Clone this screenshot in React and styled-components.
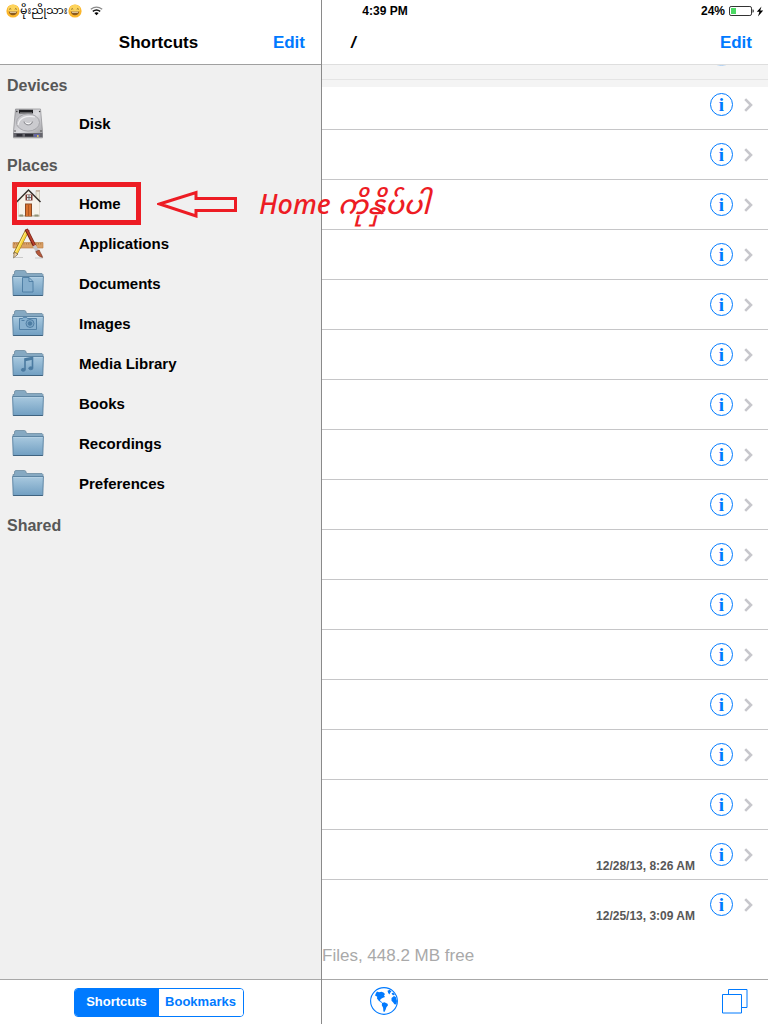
// App.jsx

import { useState } from "react";
import styled, { createGlobalStyle } from "styled-components";

const COLORS = {
    blue: "#007aff",
    black: "#000",
    heading: "#575757",
    muted: "#a9a9a9",
    chevron: "#c7c7cc",
    line: "#c6c6c8",
    divider: "#8a8a8a",
    sidebar: "#f0f0f0",
    bar: "#f4f4f4",
    red: "#ed1c24",
};

const SECTIONS = [
    { title: "Devices", items: [{ name: "Disk", icon: "disk" }] },
    {
        title: "Places",
        items: [
            { name: "Home", icon: "home", marked: true },
            { name: "Applications", icon: "apps" },
            { name: "Documents", icon: "folder", emblem: "document" },
            { name: "Images", icon: "folder", emblem: "camera" },
            { name: "Media Library", icon: "folder", emblem: "music" },
            { name: "Books", icon: "folder" },
            { name: "Recordings", icon: "folder" },
            { name: "Preferences", icon: "folder" },
        ],
    },
    { title: "Shared", items: [] },
];

const FILES = [
    ...Array.from({ length: 15 }, (_, i) => ({ id: i, date: "" })),
    { id: 15, date: "12/28/13, 8:26 AM" },
    { id: 16, date: "12/25/13, 3:09 AM" },
];

const DiskIcon = () => (
    <svg width="32" height="32" viewBox="0 -1 32 32" aria-hidden="true">
        <defs>
            <linearGradient id="diskTop" x1="0" y1="0" x2="1" y2="1">
                <stop offset="0" stopColor="#a9a9ad" />
                <stop offset="0.5" stopColor="#dcdce0" />
                <stop offset="1" stopColor="#98989c" />
            </linearGradient>
        </defs>
        <path d="M3.500 1h25l2 22v6.500h-29V23z" fill="url(#diskTop)" stroke="#8c8c90" strokeWidth="0.7" />
        <path d="M7 1.800h14v3.600H7z" fill="#1f1f22" />
        <path d="M8.500 4.600h11" stroke="#b9b9bd" strokeDasharray="1 1" />
        <ellipse cx="16" cy="14.500" rx="11.500" ry="8.600" fill="#cbcbcf" stroke="#9c9ca1" strokeWidth="0.8" />
        <path d="M6 17c1-7 8-10 17-8" fill="none" stroke="#eeeef1" strokeWidth="1.200" />
        <path d="M12 13.500c.5 4.500 8 4.500 8.600 0" fill="none" stroke="#8b8b90" />
        <path d="M13.500 14.500c1.400 1.600 4 1.600 5.200 0" fill="none" stroke="#fff" />
        <circle cx="4.800" cy="3.500" r="0.800" fill="#444" />
        <circle cx="27.600" cy="3.500" r="0.800" fill="#444" />
        <circle cx="3" cy="23" r="0.800" fill="#444" />
        <circle cx="29" cy="23" r="0.800" fill="#444" />
        <path d="M1.500 25h29v4.500h-29z" fill="#66666d" />
        <path d="M4.500 26h6v2.500h-6zM13 26h8v2.500h-8z" fill="#2e2e36" />
        <path d="M22 26h6v3h-6z" fill="#6465a0" />
        <path d="M25 27.200h1.600v1.500H25z" fill="#ffe94a" />
        <path d="M1.500 30h29" stroke="#bdbdbd" />
    </svg>
);

const HomeIcon = () => (
    <svg width="32" height="32" viewBox="0 -1 32 32" aria-hidden="true">
        <path d="M24 2.500h3.500V12H24z" fill="#eee9da" stroke="#b9b3a3" strokeWidth="0.6" />
        <path d="M24 2h4v1.800h-4z" fill="#c9b4a4" />
        <path d="M6.500 12.500L16.500 2l11 10.500v16h-21z" fill="#f6f3ea" stroke="#d6d0c0" strokeWidth="0.6" />
        <path d="M6.500 27h21v1.500h-21z" fill="#c8c0b2" />
        <path d="M4.600 14L16.500 2l12 12" fill="none" stroke="#38322e" strokeWidth="1.500" />
        <path d="M13.500 6.500h7v6h-7z" fill="#7d3a34" />
        <path d="M15 7h4v5h-4z" fill="#dbe6ee" />
        <path d="M17 7v5M15 9.500h4" stroke="#4f4843" strokeWidth="0.8" />
        <path d="M13 15.500h7V28.500h-7z" fill="#8b4a22" />
        <path d="M14 16.500h5V28h-5z" fill="#d9722e" />
        <path d="M16.500 17v11" stroke="#a44f1b" strokeWidth="0.7" />
        <path d="M7.500 26.500h3.500v2h-3.500zM22.500 26.500h4v2h-4z" fill="#8f9478" />
    </svg>
);

const AppsIcon = () => (
    <svg width="32" height="32" viewBox="0 -1 32 32" aria-hidden="true">
        <path d="M1 14.500h30V20H1z" fill="#d9a066" stroke="#b87a3f" strokeWidth="0.6" />
        <path d="M2 15.800h28" stroke="#a8723c" strokeWidth="1.600" strokeDasharray="0.8 1.6" />
        <path d="M3 29.500h8M23 30h8" stroke="#c9c9c9" />
        <path d="M15.200 2.400L3 26.500" stroke="#8a6b13" strokeWidth="4.200" />
        <path d="M14.600 3.800L4 25" stroke="#fbd53b" strokeWidth="3" />
        <path d="M13.600 4L3.400 24.400" stroke="#fdec91" strokeWidth="0.9" />
        <path d="M2.200 24l3.800 2-4.400 4z" fill="#efd1a4" stroke="#5a4a32" strokeWidth="0.6" />
        <path d="M13.200 3.400l1.400-2.600 3.400 1.800-1.200 2.600z" fill="#dd8b87" />
        <path d="M14.200 1.200L23 18.800" stroke="#701c12" strokeWidth="3.400" />
        <path d="M14.600 1.600L23 18.400" stroke="#b9412d" strokeWidth="1.800" />
        <path d="M22.200 17.600l3.400 6" stroke="#c4c4c9" strokeWidth="3.400" />
        <path d="M23.800 23.600l3.400-1.600c1 3 2.600 4.400 3.400 7.400-3-.8-5.800-2.400-6.800-5.800z" fill="#b65a3c" stroke="#6c3120" strokeWidth="0.6" />
    </svg>
);

const EMBLEMS = {
    document: (
        <path d="M10.500 9.500h6.500l4 4v10.500h-10.500zM17 9.500v4h4" fill="#86afce" />
    ),
    camera: (
        <>
            <path d="M7.500 10.500h3l1-1.200h3l1 1.200h9v11h-17z" fill="#88b1cf" />
            <circle cx="18" cy="15.500" r="4" fill="#7ba6c6" />
            <circle cx="18" cy="15.500" r="1.800" fill="#4c7da3" />
            <path d="M9.500 12.500h3" />
        </>
    ),
    music: (
        <>
            <path d="M13 21.500v-10.500l7.500-1.500v10.500" fill="none" strokeWidth="1.600" />
            <path d="M13 12.300l7.500-1.500" fill="none" strokeWidth="2" />
            <ellipse cx="11.300" cy="21.800" rx="2" ry="1.500" fill="#4b7ba1" />
            <ellipse cx="18.800" cy="20.300" rx="2" ry="1.500" fill="#4b7ba1" />
        </>
    ),
};

const FolderIcon = ({ emblem }) => (
    <svg width="32" height="32" viewBox="0 -1 32 32" aria-hidden="true">
        <defs>
            <linearGradient id="folderFront" x1="0" y1="0" x2="0" y2="1">
                <stop offset="0" stopColor="#a9c9df" />
                <stop offset="1" stopColor="#719fc2" />
            </linearGradient>
        </defs>
        <path d="M1 8V6.500h1.500V4q0-1.500 1.500-1.500h8.500q1.200 0 1.500 1.500l.5 1.500H30l1 1V10H1z" fill="#86a9c2" stroke="#6c8ba2" strokeWidth="0.8" />
        <path d="M.6 8.500h30.800l-.6 19H1.200z" fill="url(#folderFront)" stroke="#58809f" strokeWidth="0.9" />
        <path d="M1.500 9.500h29" stroke="#b4d0e3" />
        <path d="M1.200 27.500h29.600" stroke="#3f6380" />
        <g stroke="#4b7ba1" strokeWidth="0.9">{emblem && EMBLEMS[emblem]}</g>
    </svg>
);

const ICONS = { disk: DiskIcon, home: HomeIcon, apps: AppsIcon, folder: FolderIcon };

const Smiley = () => (
    <svg width="14" height="14" viewBox="0 0 14 14" aria-hidden="true">
        <circle cx="7" cy="7" r="6.600" fill="#fbb62c" />
        <ellipse cx="7" cy="5" rx="5.200" ry="4.200" fill="#fdd45c" />
        <path d="M3.200 5.400q1-1.600 2 0M8.800 5.400q1-1.600 2 0" fill="none" stroke="#7b5a20" strokeWidth="0.9" />
        <path d="M2.800 7.400h8.400q-.6 3.800-4.200 3.800t-4.200-3.800z" fill="#8a5a1e" />
        <path d="M3.600 7.800h6.800l-.5 1H4.100z" fill="#f4e4c0" />
    </svg>
);

const WifiIcon = () => (
    <svg width="13" height="10" viewBox="0 0 13 10" aria-hidden="true">
        <path d="M.8 3.300q5.700-4.400 11.400 0" fill="none" stroke="#8b8b8b" strokeWidth="1.300" />
        <path d="M2.800 5.400q3.700-2.800 7.400 0" fill="none" stroke="#111" strokeWidth="1.500" />
        <path d="M4.400 7q2.100-1.500 4.200 0L6.500 9.200z" fill="#000" />
    </svg>
);

const BatteryIcon = () => (
    <svg width="35" height="11" viewBox="0 0 35 11" aria-hidden="true">
        <rect x="0.500" y="0.500" width="22" height="9" rx="1.600" fill="#fff" stroke="#333" />
        <path d="M2 2h5v6H2z" fill="#4cd964" />
        <path d="M23.500 3.200q1.400.3 1.400 1.800t-1.400 1.800z" fill="#333" />
        <path d="M32.500 .4L27.800 5.800h2.600L29 10.400l5.200-6h-3z" fill="#000" />
    </svg>
);

const Chevron = () => (
    <svg width="9" height="14" viewBox="0 0 9 14" aria-hidden="true">
        <path d="M1.200 1.200L7 7l-5.800 5.800" fill="none" stroke={COLORS.chevron} strokeWidth="2.600" />
    </svg>
);

const GlobeIcon = () => (
    <svg width="28" height="28" viewBox="0 0 28 28" aria-hidden="true">
        <circle cx="14" cy="14" r="13.400" fill="#fff" stroke={COLORS.blue} strokeWidth="1.100" />
        <g fill={COLORS.blue}>
            <path d="M5 8.500l1-2.500 1-1.500 2 .8 2.500-.6 2 .8 1.500 1.500-1 1.500 1 1.500-2 .8-1.800 1-1.200 1.200.5 1.300 2 1-1.200.5L8.500 13.500l-1.500-2 .2-1.800-1.200-.7z" />
            <path d="M12 16l2.500-.8 3 1.500.5 1.600-1.600 2-.8 2.500-1.200 2.300-1-.6-.3-3.700-1.300-2.500z" />
            <path d="M17.500 3.800l2.200-1 1.800 1.700-1.300 1.300-.8 1.700-1.200-1.400zM21.500 6.500l1.800-1 1.600 2.500-2 .2z" />
            <path d="M21.500 11l2.500-2 1.800 1 1.200 4-.6 3.500-2-.2-1.400-2-1.500-1.500z" />
        </g>
    </svg>
);

const WindowsIcon = () => (
    <svg width="26" height="25" viewBox="0 0 26 25" aria-hidden="true">
        <path d="M6.500 5.500v-5h18.500V18.500H19.500" fill="none" stroke={COLORS.blue} />
        <path d="M.5 5.500h19v18.500H.5z" fill="#fff" stroke={COLORS.blue} />
    </svg>
);

const HomeCallout = () => (
    <Callout>
        <CalloutFrame />
        <svg width="80" height="28" viewBox="0 0 80 28" aria-hidden="true">
            <path d="M2.500 14L39 2.500v6h39.500v12H39v5.500z" fill="none" stroke={COLORS.red} strokeWidth="3" />
        </svg>
        <CalloutText>Home ကိုနှိပ်ပါ</CalloutText>
    </Callout>
);

const App = () => {
    const [tab, setTab] = useState("Shortcuts");

    return (
        <>
            <GlobalStyle />
            <Screen>
                <StatusBar>
                    <Carrier>
                        <Smiley />
                        <CarrierName>မိုးညိုသား</CarrierName>
                        <Smiley />
                        <WifiSlot><WifiIcon /></WifiSlot>
                    </Carrier>
                    <span>4:39 PM</span>
                    <Battery>
                        24%
                        <BatteryIcon />
                    </Battery>
                </StatusBar>

                <Sidebar>
                    <SidebarHeader>
                        <Title>Shortcuts</Title>
                        <EditButton>Edit</EditButton>
                    </SidebarHeader>
                    <Shortcuts>
                        {SECTIONS.map(({ title, items }) => (
                            <section key={title}>
                                <SectionTitle>{title}</SectionTitle>
                                <List>
                                    {items.map(({ name, icon, emblem, marked }) => {
                                        const Icon = ICONS[icon];
                                        return (
                                            <ShortcutItem key={name}>
                                                <ShortcutLink href="#">
                                                    <Icon emblem={emblem} />
                                                    {name}
                                                </ShortcutLink>
                                                {marked && <HomeCallout />}
                                            </ShortcutItem>
                                        );
                                    })}
                                </List>
                            </section>
                        ))}
                    </Shortcuts>
                    <SidebarToolbar>
                        <Segments>
                            {["Shortcuts", "Bookmarks"].map(name => (
                                <Segment key={name} $active={tab === name} onClick={() => setTab(name)}>
                                    {name}
                                </Segment>
                            ))}
                        </Segments>
                    </SidebarToolbar>
                </Sidebar>

                <Browser>
                    <BrowserHeader>
                        <Path>/</Path>
                        <EditButton>Edit</EditButton>
                    </BrowserHeader>
                    <ListEdge>
                        <PeekCircle />
                    </ListEdge>
                    <FileList>
                        {FILES.map(({ id, date }) => (
                            <FileRow key={id}>
                                {date && <FileDate>{date}</FileDate>}
                                <InfoButton aria-label="Info">i</InfoButton>
                                <OpenLink href="#" aria-label="Open">
                                    <Chevron />
                                </OpenLink>
                            </FileRow>
                        ))}
                    </FileList>
                    <Summary>Files, 448.2 MB free</Summary>
                    <BrowserToolbar>
                        <IconButton aria-label="Network"><GlobeIcon /></IconButton>
                        <IconButton aria-label="Windows"><WindowsIcon /></IconButton>
                    </BrowserToolbar>
                </Browser>
            </Screen>
        </>
    );
};

const GlobalStyle = createGlobalStyle`
    *, *::before, *::after {
        box-sizing: border-box;
    }

    body {
        margin: 0;
        background: #fff;
        color: ${COLORS.black};
        font-family: "Liberation Sans", Arial, sans-serif;
    }

    button {
        border: none;
        background: none;
        padding: 0;
        font: inherit;
        cursor: pointer;
    }

    svg {
        display: block;
        flex-shrink: 0;
    }
`;

const Screen = styled.div`
    min-height: 100vh;
    display: grid;
    grid-template-columns: 322px 1fr;
    grid-template-rows: 20px 1fr;
`;

const StatusBar = styled.div`
    grid-column: 1 / -1;
    grid-row: 1;
    z-index: 1;
    display: grid;
    grid-template-columns: 1fr auto 1fr;
    align-items: center;
    padding: 2px 4px 0 6px;
    font-size: 12px;
    line-height: 18px;
    font-weight: 700;
`;

const Carrier = styled.div`
    display: flex;
    align-items: center;
`;

const CarrierName = styled.span`
    font-family: "Noto Sans Myanmar", "Noto Sans", sans-serif;
    font-size: 11px;
    font-weight: 400;
    white-space: nowrap;
`;

const WifiSlot = styled.span`
    margin-left: 8px;
`;

const Battery = styled.div`
    display: flex;
    justify-content: flex-end;
    align-items: center;
    gap: 4px;
`;

const Sidebar = styled.aside`
    grid-column: 1;
    grid-row: 1 / -1;
    display: flex;
    flex-direction: column;
    border-right: 1px solid ${COLORS.divider};
    background: ${COLORS.sidebar};
`;

const Browser = styled.main`
    grid-column: 2;
    grid-row: 1 / -1;
    min-width: 0;
    display: flex;
    flex-direction: column;
`;

const Header = styled.header`
    height: 65px;
    padding: 22px 16px 0;
    display: grid;
    align-items: center;
    background: #fff;
    font-size: 17px;
    font-weight: 700;
`;

const SidebarHeader = styled(Header)`
    grid-template-columns: 1fr auto 1fr;
    padding-left: 12px;
    border-bottom: 1px solid #a0a0a0;
`;

const BrowserHeader = styled(Header)`
    grid-template-columns: 1fr auto;
    padding-left: 29px;
    border-bottom: 1px solid #dedede;
`;

const Title = styled.h1`
    grid-column: 2;
    margin: 0;
    font-size: 17px;
`;

const Path = styled.h2`
    margin: 0;
    font-size: 17px;
    font-style: italic;
`;

const EditButton = styled.button`
    justify-self: end;
    color: ${COLORS.blue};
`;

const Shortcuts = styled.nav`
    flex: 1;
`;

const SectionTitle = styled.h2`
    margin: 0;
    padding: 2px 7px 0;
    font-size: 16px;
    line-height: 38px;
    color: ${COLORS.heading};
`;

const List = styled.ul`
    margin: 0;
    padding: 0;
    list-style: none;
`;

const ShortcutItem = styled.li`
    position: relative;
`;

const ShortcutLink = styled.a`
    height: 40px;
    padding: 0 12px 4px;
    display: flex;
    align-items: center;
    gap: 35px;
    color: inherit;
    font-size: 15px;
    font-weight: 700;
    text-decoration: none;
`;

const Callout = styled.div`
    position: absolute;
    z-index: 2;
    top: -3px;
    left: 12px;
    display: flex;
    align-items: center;
    pointer-events: none;
    color: ${COLORS.red};

    svg {
        margin: 0 22px 0 16px;
    }
`;

const CalloutFrame = styled.span`
    width: 129px;
    height: 43px;
    border: 5px solid ${COLORS.red};
`;

const CalloutText = styled.span`
    font-family: "Noto Sans", "Noto Sans Myanmar", sans-serif;
    font-size: 27px;
    font-style: italic;
    font-weight: 500;
    line-height: 40px;
    white-space: nowrap;
`;

const Toolbar = styled.footer`
    height: 45px;
    display: flex;
    align-items: center;
    background: #fff;
    border-top: 1px solid #a8a8a8;
`;

const SidebarToolbar = styled(Toolbar)`
    justify-content: center;
    padding-right: 4px;
`;

const BrowserToolbar = styled(Toolbar)`
    justify-content: space-between;
    padding: 0 20px 2px 48px;
`;

const Segments = styled.div`
    display: grid;
    grid-template-columns: 1fr 1fr;
    border: 1px solid ${COLORS.blue};
    border-radius: 4px;
    overflow: hidden;
`;

const Segment = styled.button`
    width: 84px;
    height: 27px;
    padding-bottom: 2px;
    background: ${({ $active }) => ($active ? COLORS.blue : "#fff")};
    color: ${({ $active }) => ($active ? "#fff" : COLORS.blue)};
    font-size: 13px;
    font-weight: 700;
`;

const ListEdge = styled.div`
    height: 15px;
    padding-right: 35px;
    display: flex;
    justify-content: flex-end;
    align-items: flex-start;
    overflow: hidden;
    background: ${COLORS.bar};
    border-bottom: 1px solid #e4e4e4;
`;

const PeekCircle = styled.span`
    width: 23px;
    height: 23px;
    margin-top: -22px;
    border: 1px solid #a9cdf2;
    border-radius: 50%;
`;

const FileList = styled(List)`
    background: linear-gradient(${COLORS.bar} 7px, #fff 7px);
`;

const FileRow = styled.li`
    height: 50px;
    padding: 0 15px 0 0;
    display: flex;
    justify-content: flex-end;
    align-items: center;
    border-bottom: 1px solid ${COLORS.line};

    &:last-child {
        border-bottom-color: transparent;
    }
`;

const FileDate = styled.time`
    align-self: flex-end;
    margin: 0 15px 6px 0;
    font-size: 12px;
    line-height: 14px;
    font-weight: 700;
    color: ${COLORS.heading};
`;

const InfoButton = styled.button`
    width: 23px;
    height: 23px;
    border: 1px solid ${COLORS.blue};
    border-radius: 50%;
    color: ${COLORS.blue};
    font-family: "Liberation Serif", serif;
    font-size: 19px;
    font-weight: 700;
    line-height: 20px;
    text-align: center;
`;

const OpenLink = styled.a`
    margin-left: 11px;
`;

const Summary = styled.p`
    flex: 1;
    margin: 0;
    padding-top: 16px;
    font-size: 17px;
    line-height: 20px;
    color: ${COLORS.muted};
`;

const IconButton = styled.button`
    display: flex;
`;

export default App;
